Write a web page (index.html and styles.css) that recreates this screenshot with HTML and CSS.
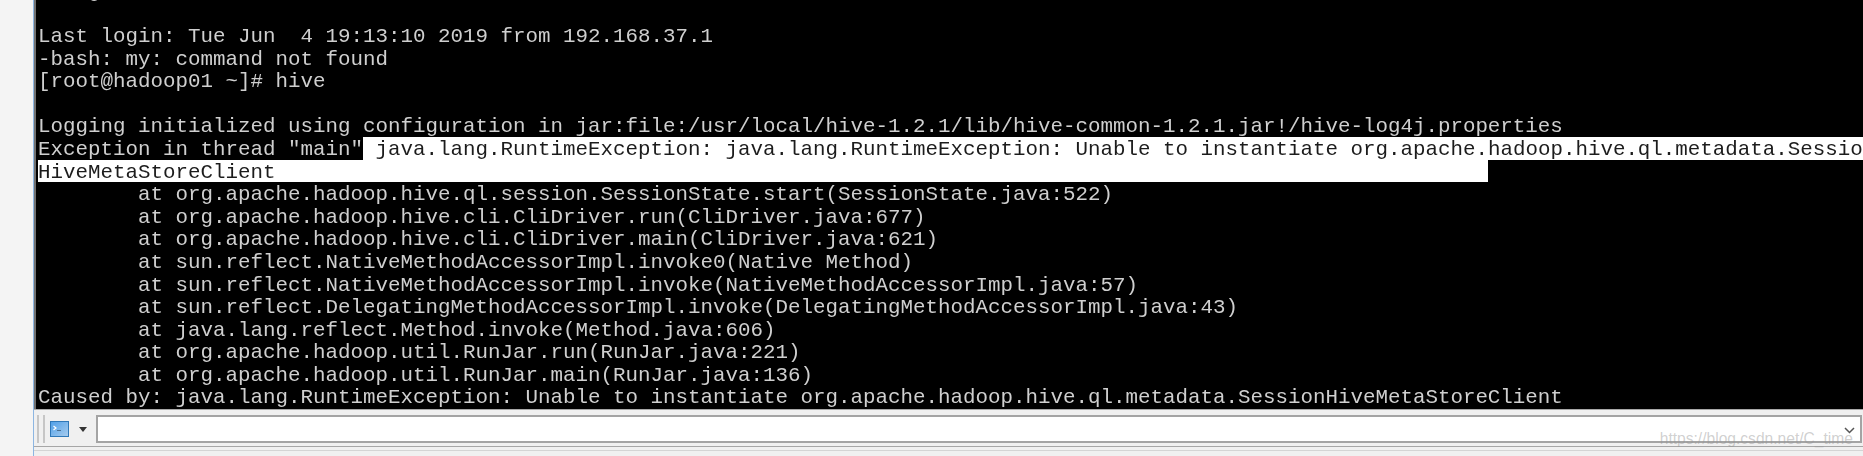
FILE: index.html
```html
<!DOCTYPE html>
<html lang="en">
<head>
<meta charset="utf-8">
<title>Xshell</title>
<link rel="stylesheet" href="styles.css">
</head>
<body>
<div class="app">
  <aside class="gutter"></aside>
  <main class="window">
    <div class="terminal">
      <div class="screen">
        <div class="line clipped">    g</div>
        <div class="line"> </div>
        <div class="line">Last login: Tue Jun  4 19:13:10 2019 from 192.168.37.1</div>
        <div class="line">-bash: my: command not found</div>
        <div class="line">[root@hadoop01 ~]# hive</div>
        <div class="line"> </div>
        <div class="line">Logging initialized using configuration in jar:file:/usr/local/hive-1.2.1/lib/hive-common-1.2.1.jar!/hive-log4j.properties</div>
        <div class="line">Exception in thread "main"<span class="sel"> java.lang.RuntimeException: java.lang.RuntimeException: Unable to instantiate org.apache.hadoop.hive.ql.metadata.Session</span></div>
        <div class="line"><span class="sel">HiveMetaStoreClient                                                                                                 </span></div>
        <div class="line">        at org.apache.hadoop.hive.ql.session.SessionState.start(SessionState.java:522)</div>
        <div class="line">        at org.apache.hadoop.hive.cli.CliDriver.run(CliDriver.java:677)</div>
        <div class="line">        at org.apache.hadoop.hive.cli.CliDriver.main(CliDriver.java:621)</div>
        <div class="line">        at sun.reflect.NativeMethodAccessorImpl.invoke0(Native Method)</div>
        <div class="line">        at sun.reflect.NativeMethodAccessorImpl.invoke(NativeMethodAccessorImpl.java:57)</div>
        <div class="line">        at sun.reflect.DelegatingMethodAccessorImpl.invoke(DelegatingMethodAccessorImpl.java:43)</div>
        <div class="line">        at java.lang.reflect.Method.invoke(Method.java:606)</div>
        <div class="line">        at org.apache.hadoop.util.RunJar.run(RunJar.java:221)</div>
        <div class="line">        at org.apache.hadoop.util.RunJar.main(RunJar.java:136)</div>
        <div class="line">Caused by: java.lang.RuntimeException: Unable to instantiate org.apache.hadoop.hive.ql.metadata.SessionHiveMetaStoreClient</div>
      </div>
    </div>
    <div class="toolbar">
      <span class="grip"></span>
      <svg class="shell-icon" width="19" height="16" viewBox="0 0 19 16" aria-hidden="true">
        <defs><linearGradient id="shell" x1="0" y1="0" x2="1" y2="1"><stop offset="0" stop-color="#4f9fe8"/><stop offset="1" stop-color="#a9cdee"/></linearGradient></defs>
        <rect x="0.5" y="0.5" width="18" height="15" fill="url(#shell)" stroke="#2f78b8"/>
        <path d="M3.500 5l2.500 2-2.500 2" fill="none" stroke="#fff" stroke-width="1.200"/>
        <path d="M7 9.500h4" stroke="#4a6f90" stroke-width="1"/>
      </svg>
      <span class="caret"></span>
      <div class="combo">
        <svg class="chevron" width="11" height="7" viewBox="0 0 11 7" aria-hidden="true"><path d="M1 1l4.500 4.500L10 1" fill="none" stroke="#555" stroke-width="1.500"/></svg>
        <span class="mark">https://blog.csdn.net/C_time</span>
      </div>
    </div>
    <div class="status"><div class="status-rule"></div></div>
  </main>
</div>
</body>
</html>
```

FILE: styles.css
```css
* { box-sizing: border-box; }
html, body { margin: 0; height: 100%; overflow: hidden; background: #f5f5f5; }
.app { display: flex; width: 1863px; height: 456px; }
.gutter { width: 33px; flex: none; background: #f4f4f4; }
.window { flex: 1; min-width: 0; display: flex; flex-direction: column; border-left: 1px solid #8db6e2; background: #f0f0f0; }
.terminal {
  height: 409px; flex: none; overflow: hidden;
  padding: 1.4px 0 0 2px;
  background: #000; border-left: 2px solid #707070;
}
.screen {
  color: #cfcfcf; font: 20.84px/26.6px "Liberation Mono", monospace;
  filter: blur(0.35px);
}
.line { height: 22.6px; white-space: pre; }
.clipped { margin-top: -22.6px; }
.sel { display: inline-block; vertical-align: top; height: 22.6px; background: #fff; color: #1c1c1c; }
.toolbar {
  height: 38px; flex: none; display: flex; align-items: center; padding: 2px 1px 0 3px;
  background: #f0f0f0; border-top: 1px solid #a8a8a8; border-bottom: 1px solid #a6a6a6;
}
.grip { width: 8px; height: 28px; flex: none; margin-right: 5px; border-left: 2px solid #c6c6c6; border-right: 2px solid #c6c6c6; }
.shell-icon { margin-right: 10px; flex: none; }
.caret { flex: none; width: 0; height: 0; border-left: 4.5px solid transparent; border-right: 4.5px solid transparent; border-top: 5px solid #333; margin-right: 9px; }
.combo {
  position: relative; flex: 1; height: 28px; background: #fff; border: 2px solid #a4a4a4;
}
.chevron { position: absolute; right: 5px; top: 10px; }
.mark {
  position: absolute; right: 7px; top: 12px;
  font: 15.6px/20px "Liberation Sans", sans-serif; color: rgba(150,150,150,.45); white-space: nowrap;
}
.status { flex: 1; padding-top: 3px; background: #f0f0f0; }
.status-rule { height: 1px; background: #d4d4d4; }
```
